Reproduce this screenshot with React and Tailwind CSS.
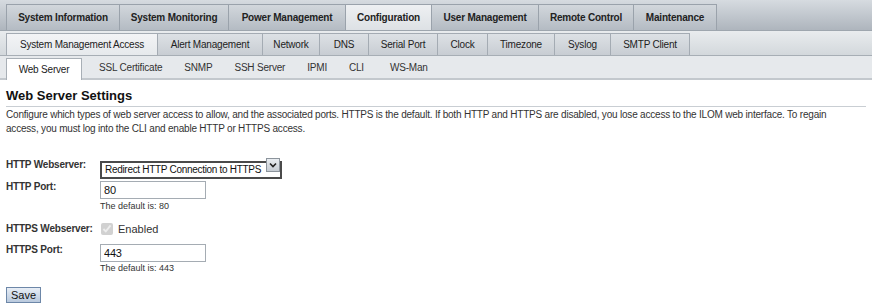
import React, { useState } from "react";

const topTabs = [
  ["System Information", 114],
  ["System Monitoring", 109],
  ["Power Management", 117],
  ["Configuration", 86],
  ["User Management", 107],
  ["Remote Control", 95],
  ["Maintenance", 83],
];

const subTabs = [
  ["System Management Access", 152],
  ["Alert Management", 105],
  ["Network", 57],
  ["DNS", 49],
  ["Serial Port", 69],
  ["Clock", 50],
  ["Timezone", 67],
  ["Syslog", 56],
  ["SMTP Client", 79],
];

const thirdTabs = ["SSL Certificate", "SNMP", "SSH Server", "IPMI", "CLI"];

export default function App() {
  const [mode, setMode] = useState("redirect");
  const [httpPort, setHttpPort] = useState("80");
  const [httpsPort, setHttpsPort] = useState("443");

  return (
    <div className="w-[872px] h-[304px] bg-white overflow-hidden font-['Liberation_Sans',Arial,sans-serif] text-[#333] tracking-[-0.2px]">
      {/* top navigation */}
      <div className="h-[31px] flex items-end pl-[6px] bg-gradient-to-b from-[#d6dbe0] to-[#aeb5bd] border-b border-[#9ea6ae]">
        {topTabs.map(([label, w]) => {
          const active = label === "Configuration";
          return (
            <div
              key={label}
              style={{ width: w }}
              className={`h-[26px] flex items-center justify-center border-t border-r first:border-l border-[#9aa2ab] text-[10px] font-bold text-[#222] ${
                active
                  ? "bg-gradient-to-b from-[#eef0f2] to-[#dde1e5]"
                  : "bg-gradient-to-b from-[#d2d7dc] to-[#b4bbc3]"
              }`}
            >
              {label}
            </div>
          );
        })}
      </div>

      {/* second row */}
      <div className="h-[25px] flex items-end pl-[6px] bg-gradient-to-b from-[#e9ecee] to-[#d3d8dc] border-b border-[#a7aeb5]">
        {subTabs.map(([label, w]) => {
          const active = label === "System Management Access";
          return (
            <div
              key={label}
              style={{ width: w }}
              className={`h-[22px] flex items-center justify-center border-t border-r first:border-l border-[#a4abb3] text-[10px] text-[#222] ${
                active
                  ? "bg-gradient-to-b from-[#f3f4f6] to-[#e6e9ec]"
                  : "bg-gradient-to-b from-[#dde1e5] to-[#c8cdd3]"
              }`}
            >
              {label}
            </div>
          );
        })}
      </div>

      {/* third row */}
      <div className="h-[24px] flex items-end pl-[6px] bg-[#e6e9ec] border-b-2 border-[#c3c8cd]">
        <div className="w-[76px] h-[22px] -mb-[2px] bg-white border border-b-0 border-[#a8afb6] flex items-center justify-center text-[10px] text-[#222]">
          Web Server
        </div>
        <div className="flex h-[21px] items-center gap-[22px] ml-[17px] text-[10px] text-[#333]">
          {thirdTabs.map((label) => (
            <span key={label}>{label}</span>
          ))}
          <span className="ml-[4px]">WS-Man</span>
        </div>
      </div>

      {/* content */}
      <div className="px-[6px]">
        <h1 className="mt-[8px] text-[13px] tracking-normal font-bold text-[#111] leading-[16px] pb-[2px] border-b border-[#c9ced3]">
          Web Server Settings
        </h1>
        <p className="mt-[1px] pr-[8px] text-[10px] leading-[14px] text-[#333]">
          Configure which types of web server access to allow, and the associated ports. HTTPS is the default. If both HTTP and HTTPS are disabled, you lose access to the ILOM web interface. To regain access, you must log into the CLI and enable HTTP or HTTPS access.
        </p>

        <div className="mt-[20px] flex items-center">
          <div className="w-[94px] font-bold text-[10px] leading-[12px]">HTTP Webserver:</div>
          <div className="relative w-[182px] h-[18px]">
            <select
              value={mode}
              onChange={(e) => setMode(e.target.value)}
              className="appearance-none w-full h-full border-2 border-[#4a4a4a] bg-white pl-[3px] pr-[16px] text-[10px] tracking-[-0.3px] text-[#111] leading-[14px] outline-none"
            >
              <option value="redirect">Redirect HTTP Connection to HTTPS</option>
              <option value="enabled">Enabled</option>
              <option value="disabled">Disabled</option>
            </select>
            <div className="absolute right-[2px] top-[2px] w-[14px] h-[14px] bg-gradient-to-b from-[#e9edf1] to-[#c6ccd3] border border-[#8c949c] flex items-center justify-center pointer-events-none">
              <svg width="8" height="6" viewBox="0 0 8 6">
                <path d="M1 1.5 L4 4.5 L7 1.5" fill="none" stroke="#222" strokeWidth="1.6" />
              </svg>
            </div>
          </div>
        </div>

        <div className="mt-[7px] flex items-start">
          <div className="w-[94px] font-bold text-[10px] leading-[12px]">HTTP Port:</div>
          <div>
            <input
              value={httpPort}
              onChange={(e) => setHttpPort(e.target.value)}
              className="block h-[18px] w-[106px] border border-[#a5acb3] px-[3px] text-[11px] text-[#111] outline-none"
            />
            <div className="text-[9px] tracking-normal text-[#333] mt-[2px] leading-[11px]">The default is: 80</div>
          </div>
        </div>

        <div className="mt-[9px] flex items-center">
          <div className="w-[94px] font-bold text-[10px] leading-[12px]">HTTPS Webserver:</div>
          <label className="flex items-center gap-[5px]">
            <input type="checkbox" checked disabled readOnly className="w-[12px] h-[12px] m-0 ml-[1px] accent-[#bbb]" />
            <span className="text-[11px] tracking-normal text-[#333]">Enabled</span>
          </label>
        </div>

        <div className="mt-[6px] flex items-start">
          <div className="w-[94px] font-bold text-[10px] leading-[12px]">HTTPS Port:</div>
          <div>
            <input
              value={httpsPort}
              onChange={(e) => setHttpsPort(e.target.value)}
              className="block h-[18px] w-[106px] border border-[#a5acb3] px-[3px] text-[11px] text-[#111] outline-none"
            />
            <div className="text-[9px] tracking-normal text-[#333] mt-[1px] leading-[11px]">The default is: 443</div>
          </div>
        </div>

        <button className="block mt-[13px] h-[16px] w-[35px] border border-[#6d87a8] bg-gradient-to-b from-[#e8eef6] to-[#b9c9dd] text-[11px] tracking-normal text-[#111] leading-[14px]">
          Save
        </button>
      </div>
    </div>
  );
}
